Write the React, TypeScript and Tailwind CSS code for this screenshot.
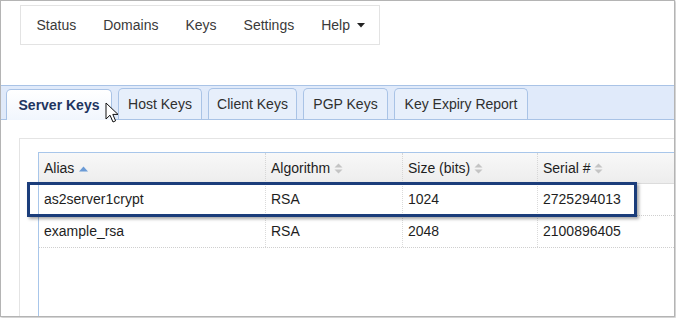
import React from 'react';

const navItems = ['Status', 'Domains', 'Keys', 'Settings'];
const tabs = [
    { label: 'Server Keys', w: 'w-[106px]' },
    { label: 'Host Keys', w: 'w-[84px]' },
    { label: 'Client Keys', w: 'w-[89px]' },
    { label: 'PGP Keys', w: 'w-[85px]' },
    { label: 'Key Expiry Report', w: 'w-[134px]' },
];

const rows = [
    { alias: 'as2server1crypt', algorithm: 'RSA', size: '1024', serial: '2725294013' },
    { alias: 'example_rsa', algorithm: 'RSA', size: '2048', serial: '2100896405' },
];

const cols = 'grid grid-cols-[227px_137px_135px_170px]';

const SortUp: React.FC = () => (
    <svg width="9" height="6" viewBox="0 0 9 6" className="ml-[5px] mt-[1px]">
        <polygon points="0,5.5 4.5,0.5 9,5.5" fill="#6b9bd6" />
    </svg>
);

const SortBoth: React.FC = () => (
    <svg width="9" height="11" viewBox="0 0 9 11" className="ml-[4px] mt-[1px]">
        <polygon points="0.5,4.5 4.5,0.5 8.5,4.5" fill="#c4c4c4" />
        <polygon points="0.5,6.5 4.5,10.5 8.5,6.5" fill="#c4c4c4" />
    </svg>
);

const Cursor: React.FC = () => (
    <svg width="14" height="22" viewBox="0 0 14 22" className="absolute left-[105px] top-[102px]">
        <path
            d="M1 1 L1 17 L5 13.2 L8 20 L10.6 18.8 L7.8 12.4 L13 12.4 Z"
            fill="#fff"
            stroke="#111"
            strokeWidth="1"
            strokeLinejoin="round"
        />
    </svg>
);

const App: React.FC = () => {
    return (
        <div className="relative w-[676px] h-[318px] overflow-hidden bg-white font-['Liberation_Sans',Arial,sans-serif] text-[14px]">
            <div className="w-[675px] h-[317px] border border-[#b4b4b4] shadow-[1px_1px_2px_rgba(0,0,0,0.25)] overflow-hidden flex flex-col">
                {/* top nav */}
                <div className="ml-[19px] mt-[4px] w-[360px] h-[40px] border border-[#e3e3e3] flex items-center pl-[2px] text-[#3a3a3a]">
                    {navItems.map((item) => (
                        <span key={item} className="px-[13.5px]">{item}</span>
                    ))}
                    <span className="pl-[13.5px] flex items-center">
                        Help
                        <svg width="8" height="5" viewBox="0 0 8 5" className="ml-[7px] mt-[1px]">
                            <polygon points="0,0 8,0 4,4.5" fill="#222" />
                        </svg>
                    </span>
                </div>

                {/* tab strip */}
                <div className="mt-[40px] h-[35px] bg-[#e0eafa] border-t border-b border-[#a9c3e6] flex items-end pl-[5px] gap-[6px]">
                    {tabs.map((t, i) => (
                        <div
                            key={t.label}
                            className={
                                i === 0
                                    ? `${t.w} h-[31px] -mb-px flex items-center justify-center rounded-t-[5px] border border-b-0 border-[#a9c3e6] bg-gradient-to-b from-white to-[#f1f6fd] font-bold text-[#1f3560]`
                                    : `${t.w} h-[31px] flex items-center justify-center rounded-t-[5px] border border-b-0 border-[#a9c3e6] bg-[#e7effb] text-[#2f2f2f]`
                            }
                        >
                            {t.label}
                        </div>
                    ))}
                </div>

                {/* panel */}
                <div className="mt-[18px] ml-[18px] flex-1 border-t border-l border-[#e4e4e4] pt-[13px] pl-[18px]">
                    <div className="h-full border-t border-l border-[#a8c6ea] text-[#1e1e1e]">
                        <div className={`${cols} h-[31px] bg-gradient-to-b from-[#f8f8f8] to-[#ededed] border-b border-[#dcdcdc]`}>
                            <div className="flex items-center pl-[5px] border-r border-dotted border-[#d6d6d6]">
                                Alias <SortUp />
                            </div>
                            <div className="flex items-center pl-[5px] border-r border-dotted border-[#d6d6d6]">
                                Algorithm <SortBoth />
                            </div>
                            <div className="flex items-center pl-[5px] border-r border-dotted border-[#d6d6d6]">
                                Size (bits) <SortBoth />
                            </div>
                            <div className="flex items-center pl-[5px]">
                                Serial # <SortBoth />
                            </div>
                        </div>
                        {rows.map((r) => (
                            <div key={r.alias} className={`${cols} h-[32px] border-b border-dotted border-[#cfcfcf]`}>
                                <div className="flex items-center pl-[5px] border-r border-dotted border-[#dadada]">{r.alias}</div>
                                <div className="flex items-center pl-[5px] border-r border-dotted border-[#dadada]">{r.algorithm}</div>
                                <div className="flex items-center pl-[5px] border-r border-dotted border-[#dadada]">{r.size}</div>
                                <div className="flex items-center pl-[5px]">{r.serial}</div>
                            </div>
                        ))}
                    </div>
                </div>
            </div>

            {/* highlight box over the first row */}
            <div className="absolute left-[27px] top-[182px] w-[610px] h-[35px] border-[3px] border-[#1b3d7b] shadow-[2px_2px_3px_rgba(0,0,0,0.35)]" />

            <Cursor />
        </div>
    );
};

export default App;
